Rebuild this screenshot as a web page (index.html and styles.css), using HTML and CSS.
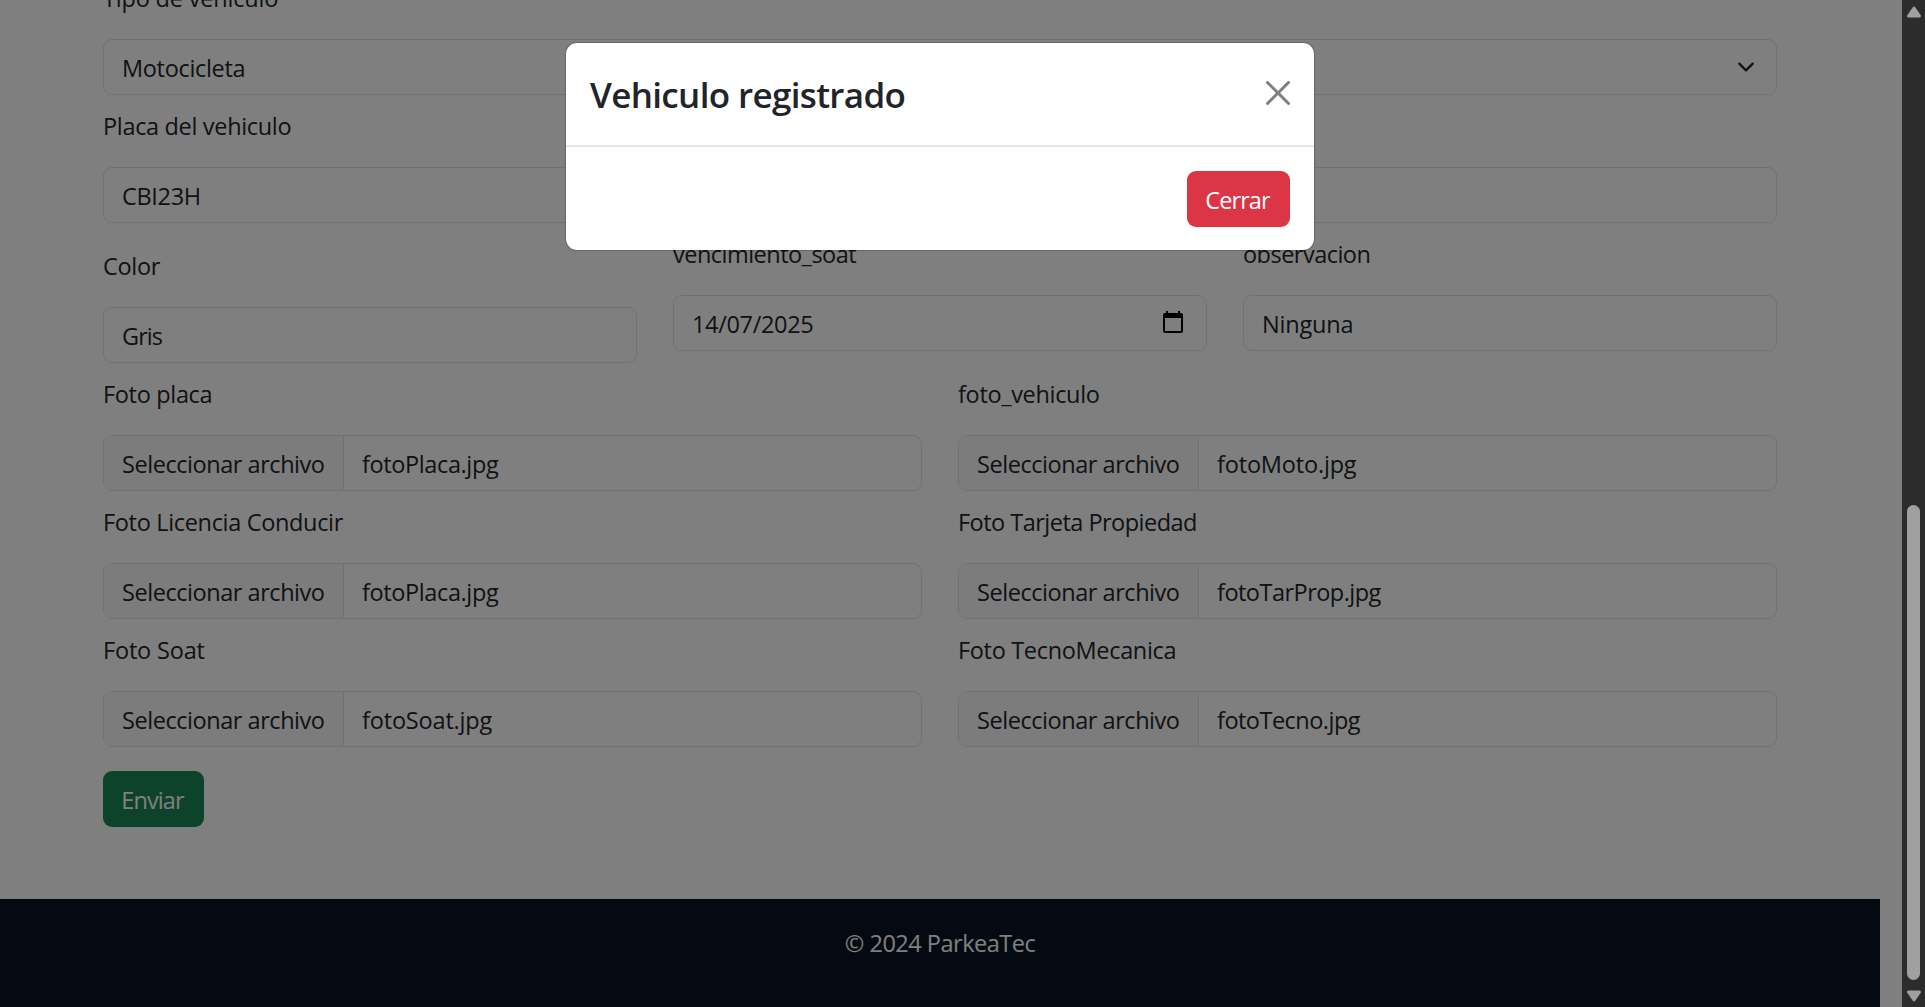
FILE: index.html
```html
<!DOCTYPE html>
<html lang="es">
<head>
<meta charset="utf-8">
<title>ParkeaTec</title>
<link rel="stylesheet" href="styles.css">
</head>
<body>
<div class="viewport">
  <div class="page">
    <main class="form">
      <div class="row">
        <div class="field">
          <div class="label loose">Tipo de vehiculo</div>
          <div class="control select"><span>Motocicleta</span>
            <svg class="chevron" width="18" height="18" viewBox="0 0 16 16" fill="none" stroke="#212529" stroke-width="2" stroke-linecap="round" stroke-linejoin="round"><path d="m2 5 6 6 6-6"/></svg>
          </div>
        </div>
      </div>
      <div class="row">
        <div class="field">
          <div class="label">Placa del vehiculo</div>
          <div class="control">CBI23H</div>
        </div>
      </div>
      <div class="row">
        <div class="field field-offset">
          <div class="label">Color</div>
          <div class="control tight">Gris</div>
        </div>
        <div class="field">
          <div class="label snug">vencimiento_soat</div>
          <div class="control date"><span>14/07/2025</span>
            <svg width="24" height="24" viewBox="0 0 24 24"><path d="M20 3h-1V1h-2v2H7V1H5v2H4c-1.1 0-2 .9-2 2v16c0 1.1.9 2 2 2h16c1.1 0 2-.9 2-2V5c0-1.1-.9-2-2-2zm0 18H4V8h16v13z"/></svg>
          </div>
        </div>
        <div class="field">
          <div class="label snug">observacion</div>
          <div class="control loose">Ninguna</div>
        </div>
      </div>
      <div class="row">
        <div class="field">
          <div class="label">Foto placa</div>
          <div class="control file"><span class="file-button">Seleccionar archivo</span><span class="file-name">fotoPlaca.jpg</span></div>
        </div>
        <div class="field">
          <div class="label">foto_vehiculo</div>
          <div class="control file"><span class="file-button">Seleccionar archivo</span><span class="file-name loose">fotoMoto.jpg</span></div>
        </div>
      </div>
      <div class="row">
        <div class="field">
          <div class="label">Foto Licencia Conducir</div>
          <div class="control file"><span class="file-button">Seleccionar archivo</span><span class="file-name">fotoPlaca.jpg</span></div>
        </div>
        <div class="field">
          <div class="label snug">Foto Tarjeta Propiedad</div>
          <div class="control file"><span class="file-button">Seleccionar archivo</span><span class="file-name snug">fotoTarProp.jpg</span></div>
        </div>
      </div>
      <div class="row">
        <div class="field">
          <div class="label loose">Foto Soat</div>
          <div class="control file"><span class="file-button">Seleccionar archivo</span><span class="file-name loose">fotoSoat.jpg</span></div>
        </div>
        <div class="field">
          <div class="label">Foto TecnoMecanica</div>
          <div class="control file"><span class="file-button">Seleccionar archivo</span><span class="file-name snug">fotoTecno.jpg</span></div>
        </div>
      </div>
      <button class="btn btn-success" type="button">Enviar</button>
    </main>
    <footer class="footer">© 2024 ParkeaTec</footer>
    <div class="backdrop"></div>
    <div class="modal" role="dialog">
      <div class="modal-header">
        <h1 class="modal-title">Vehiculo registrado</h1>
        <svg class="close" width="24" height="24" viewBox="0 0 16 16"><path fill="#000" d="M.293.293a1 1 0 0 1 1.414 0L8 6.586 14.293.293a1 1 0 1 1 1.414 1.414L9.414 8l6.293 6.293a1 1 0 0 1-1.414 1.414L8 9.414l-6.293 6.293a1 1 0 0 1-1.414-1.414L6.586 8 .293 1.707a1 1 0 0 1 0-1.414z"/></svg>
      </div>
      <div class="modal-footer"><button class="btn btn-danger" type="button">Cerrar</button></div>
    </div>
  </div>
  <div class="scrollbar">
    <svg width="16" height="12" viewBox="0 0 16 12"><path d="M8 2 13.5 10H2.5z" fill="#a0a0a0" stroke="#a0a0a0" stroke-width="3" stroke-linejoin="round"/></svg>
    <div class="thumb"></div>
    <svg width="16" height="12" viewBox="0 0 16 12"><path d="M8 10 2.5 2H13.5z" fill="#a0a0a0" stroke="#a0a0a0" stroke-width="3" stroke-linejoin="round"/></svg>
  </div>
</div>
</body>
</html>
```
FILE: styles.css
```css
* {
  box-sizing: border-box;
}

body {
  margin: 0;
  background: #fff;
  color: #212529;
  font-family: "Open Sans", "Noto Sans", sans-serif;
  font-size: 23.5px;
  line-height: 36px;
  letter-spacing: -0.33px;
}

.viewport {
  display: flex;
  height: 1007px;
  overflow: hidden;
}

.page {
  position: relative;
  flex: 1;
  display: flex;
  flex-direction: column;
  overflow: hidden;
}

/* The page is scrolled: the first label is cut by the top edge. */
.form {
  width: 1674px;
  margin: -33px 0 0 103px;
  padding-bottom: 72px;
}

.row {
  display: flex;
  align-items: flex-start;
  gap: 36px;
}

.field {
  flex: 1 1 0;
  min-width: 0;
  padding-top: 12px;
}

.field-offset {
  padding-top: 24px;
}

.label {
  height: 36px;
  padding-top: 1px;
  margin-bottom: 24px;
  white-space: nowrap;
}

.control {
  display: flex;
  height: 56px;
  padding: 10px 18px 8px;
  border: 1px solid #dee2e6;
  border-radius: 9px;
  white-space: nowrap;
}

.field-offset ~ .field .control {
  margin-bottom: 12px;
}

.select,
.date {
  justify-content: space-between;
}

.chevron {
  margin: 8px 3px 0 0;
}

.date svg {
  margin-top: 4px;
  margin-right: 3px;
}

.file {
  padding: 0;
  overflow: hidden;
}

.file-button {
  width: 240px;
  padding: 10px 0 8px 18px;
  border-right: 1px solid #dee2e6;
  background: #f8f9fa;
  letter-spacing: -0.45px;
}

.file-name {
  padding: 10px 18px 8px;
  letter-spacing: -0.38px;
}

.loose {
  letter-spacing: -0.18px;
}

.snug {
  letter-spacing: -0.52px;
}

.tight {
  letter-spacing: -0.95px;
}

.btn {
  display: block;
  height: 56px;
  padding: 2px 2px 0 0;
  border: 0;
  border-radius: 9px;
  color: #fff;
  font: inherit;
  letter-spacing: -0.9px;
}

.btn-success {
  width: 101px;
  margin-top: 24px;
  background: #198754;
}

.btn-danger {
  width: 103px;
  background: #dc3545;
}

.footer {
  width: 1880px;
  height: 108px;
  padding-top: 26px;
  background: #0b1524;
  color: #fff;
  text-align: center;
  letter-spacing: -0.5px;
}

.backdrop {
  position: absolute;
  inset: 0;
  background: rgba(0, 0, 0, 0.5);
}

.modal {
  position: absolute;
  top: 42px;
  left: 565px;
  width: 750px;
  height: 209px;
  border: 1px solid rgba(0, 0, 0, 0.175);
  border-radius: 12px;
  background: #fff;
  background-clip: padding-box;
}

.modal-header {
  display: flex;
  align-items: flex-start;
  justify-content: space-between;
  height: 104px;
  padding: 25px 24px 0;
  border-bottom: 2px solid #e4e7ea;
}

.modal-title {
  margin: 0;
  font-size: 35px;
  font-weight: 600;
  line-height: 54px;
  letter-spacing: -0.65px;
}

.close {
  margin-top: 13px;
  opacity: 0.5;
}

.modal-footer {
  display: flex;
  justify-content: flex-end;
  padding: 24px 24px 0;
}

.scrollbar {
  display: flex;
  flex: 0 0 23px;
  flex-direction: column;
  align-items: center;
  padding: 6px 0 5px;
  background: #2c2c2c;
}

.thumb {
  width: 13px;
  height: 475px;
  margin: auto 0 10px;
  border-radius: 7px;
  background: #a0a0a0;
}
```
